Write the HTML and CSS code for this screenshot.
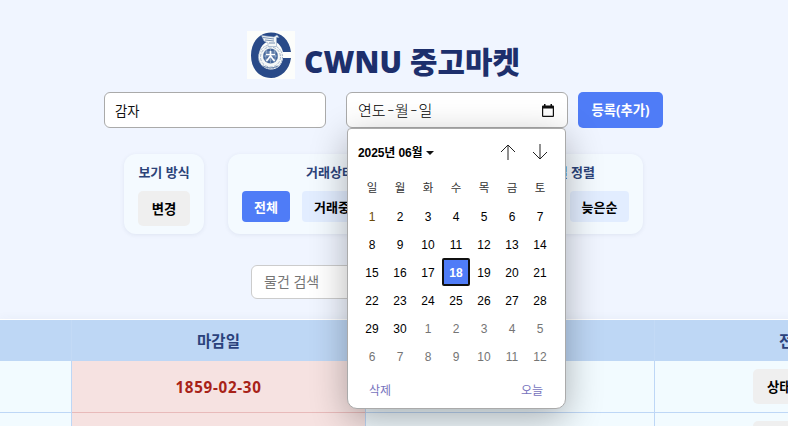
FILE: index.html
```html
<!DOCTYPE html>
<html lang="ko">
<head>
<meta charset="utf-8">
<title>CWNU 중고마켓</title>
<link rel="stylesheet" href="styles.css">
</head>
<body>
<main class="page">
  <header class="brand">
    <svg class="logo" viewBox="0 0 48 48" aria-hidden="true">
      <rect width="48" height="48" fill="#fcfdfb"/>
      <path d="M44 21C42.500 8.500 34 1.500 24 1.500C12.500 1.500 4 11 4 24.500S12.500 47 24 47C34 47 42.500 39 44 27H36C35 34 30.500 38.500 24 38.500C17 38.500 12 33 12 25S17 10 24 10C30 10 34.500 14.500 36 21Z" fill="#294a88"/>
      <circle cx="23.500" cy="26" r="12" fill="#f5f8f7" stroke="#9cafc7" stroke-width="1" stroke-dasharray="2 1"/>
      <circle cx="23.500" cy="26" r="10" fill="none" stroke="#a5b5ca" stroke-width="1" stroke-dasharray="3 1.500"/>
      <circle cx="23.500" cy="25" r="7.500" fill="#45679b"/>
      <path d="M16 25H31M17.500 21H29.500M17.500 29H29.500M23.500 17.500V32.500M20 18Q17 25 20 32M27 18Q30 25 27 32" fill="none" stroke="#a9bdd5" stroke-width=".6"/>
      <path d="M19 23.500H28M23.500 20V25L19.500 30M23.500 25L27.500 30" fill="none" stroke="#fff" stroke-width="1.700"/>
      <path d="M14.500 4.500L27 6L30 4L32 6.500H29.500V15.500H21V12L17 10Z" fill="#f4f7f7" stroke="#8ca3c1" stroke-width=".6"/>
      <path d="M16 6.500L27 8M18 9L27 10M22 12H28" fill="none" stroke="#58769f" stroke-width=".8"/>
      <path d="M16 35Q23 39 31 35" fill="none" stroke="#6580a8" stroke-width="1"/>
    </svg>
    <h1>CWNU 중고마켓</h1>
  </header>

  <form class="entry">
    <div class="field">감자</div>
    <div class="field date">
      <span class="date-text">연도<b>-</b>월<b>-</b>일</span>
      <svg class="cal-icon" viewBox="0 0 12 13" aria-hidden="true"><path fill="#111" fill-rule="evenodd" d="M2 0H3.500V1.500H8.500V0H10V1.500H11Q12 1.500 12 2.500V12Q12 13 11 13H1Q0 13 0 12V2.500Q0 1.500 1 1.500H2ZM1.200 4.500V11.800H10.800V4.500Z"/></svg>
      <section class="picker">
        <div class="picker-head">
          <span class="month">2025년 06월</span><i class="caret"></i>
          <svg class="arrow up" viewBox="0 0 16 16"><path d="M8 16V1M1 8L8 1L15 8"/></svg>
          <svg class="arrow" viewBox="0 0 16 16"><path d="M8 0V15M1 8L8 15L15 8"/></svg>
        </div>
        <div class="days week"><span>일</span><span>월</span><span>화</span><span>수</span><span>목</span><span>금</span><span>토</span></div>
        <div class="days">
          <span class="sunday">1</span><span>2</span><span>3</span><span>4</span><span>5</span><span>6</span><span>7</span>
          <span>8</span><span>9</span><span>10</span><span>11</span><span>12</span><span>13</span><span>14</span>
          <span>15</span><span>16</span><span>17</span><span class="today">18</span><span>19</span><span>20</span><span>21</span>
          <span>22</span><span>23</span><span>24</span><span>25</span><span>26</span><span>27</span><span>28</span>
          <span>29</span><span>30</span><span class="out">1</span><span class="out">2</span><span class="out">3</span><span class="out">4</span><span class="out">5</span>
          <span class="out">6</span><span class="out">7</span><span class="out">8</span><span class="out">9</span><span class="out">10</span><span class="out">11</span><span class="out">12</span>
        </div>
        <div class="picker-foot"><span>삭제</span><span>오늘</span></div>
      </section>
    </div>
    <div class="submit">등록(추가)</div>
  </form>

  <div class="filters">
    <section class="card view">
      <h2>보기 방식</h2>
      <div class="gray-button">변경</div>
    </section>
    <section class="card options">
      <div class="group status">
        <h2>거래상태</h2>
        <div class="chips"><div class="chip active">전체</div><div class="chip">거래중</div></div>
      </div>
      <div class="group order">
        <h2>마감일 정렬</h2>
        <div class="chips"><div class="chip late">늦은순</div></div>
      </div>
    </section>
  </div>

  <div class="search">물건 검색</div>

  <div class="table">
    <div class="cell th"></div><div class="cell th">마감일</div><div class="cell th"></div><div class="cell th last">전환</div>
    <div class="cell"></div><div class="cell due">1859-02-30</div><div class="cell"></div><div class="cell last"><div class="gray-button">상태</div></div>
    <div class="cell"></div><div class="cell due"></div><div class="cell"></div><div class="cell last"><div class="gray-button"></div></div>
  </div>
</main>
</body>
</html>
```
FILE: styles.css
```css
* { box-sizing: border-box; }
body {
  margin: 0;
  overflow: hidden;
  background: #f0f5ff;
  font-family: "Noto Sans", "Noto Sans CJK KR", sans-serif;
}
h1, h2 { margin: 0; }
.page { width: 788px; height: 426px; overflow: hidden; padding-top: 31px; }

.brand { display: flex; gap: 9px; height: 48px; margin-left: 247px; }
.logo { width: 48px; height: 48px; }
.brand h1 {
  color: #1d2f6c;
  font-size: 29.8px;
  letter-spacing: .1px;
  line-height: 62px;
  font-weight: 900;
  white-space: nowrap;
}

.entry { display: flex; height: 36px; margin: 13px 0 0 104px; }
.field {
  width: 222px;
  height: 36px;
  padding: 0 10px;
  border: 1px solid #aaa;
  border-radius: 6px;
  background: #fff;
  color: #111;
  font-size: 13.333px;
  line-height: 36px;
}
.date { position: relative; display: flex; align-items: center; justify-content: space-between; margin-left: 20px; padding: 0 13px 0 11px; }
.date-text { color: #000; font-weight: 300; font-size: 15px; line-height: 32px; font-family: "Noto Sans CJK KR", sans-serif; }
.date-text b { display: inline-block; width: 9.500px; font-weight: 300; text-align: center; transform: scaleX(1.4); }
.cal-icon { width: 12px; height: 13px; }
.submit {
  width: 85px;
  margin-left: 10px;
  border-radius: 5px;
  background: #4f7cf7;
  color: #fff;
  font-size: 13.333px;
  font-weight: 700;
  line-height: 37px;
  text-align: center;
}

.picker {
  position: absolute;
  z-index: 5;
  left: 0;
  top: 35px;
  width: 219px;
  height: 281px;
  padding: 0 10px;
  border: 1px solid #aaa;
  border-radius: 4px 4px 10px 10px;
  background: #fff;
  box-shadow: 0 10px 36px rgba(0, 0, 0, .3);
  color: #000;
  font: 12px/28px "Liberation Sans", "Noto Sans CJK KR", sans-serif;
}
.picker-head { display: flex; align-items: center; height: 46px; padding: 2px 7px 0 0; }
.month { font-weight: 700; letter-spacing: -.1px; white-space: nowrap; }
.caret { margin-left: 3px; border: 4px solid transparent; border-top-color: #111; border-bottom: 0; }
.arrow { width: 16px; height: 16px; margin-bottom: 2px; fill: none; stroke: #222; stroke-width: 1; }
.arrow.up { margin: 0 16px 2px auto; }
.days { display: grid; grid-template-columns: repeat(7, 28px); grid-auto-rows: 28px; text-align: center; }
.week { margin-bottom: 1px; height: 27px; color: #333; font-size: 11.5px; line-height: 26px; }
.sunday { color: #6b4a08; }
.out { color: #757575; }
.today { margin-top: -1px; height: 28px; border: 2px solid #101010; border-radius: 2px; background: #4f7cf7; color: #fff; font-weight: 700; line-height: 26px; }
.picker-foot { display: flex; justify-content: space-between; padding: 6px 12px 0 11px; color: #7773bd; }

.filters { display: flex; gap: 24px; margin: 26px 0 0 124px; }
.card { height: 80px; border-radius: 12px; background: #f4faff; box-shadow: 0 1px 4px rgba(50, 70, 110, .09); }
.view { width: 80px; padding: 0 14px; }
.card h2 { height: 37px; color: #2c4379; font-size: 13px; font-weight: 600; line-height: 36px; white-space: nowrap; text-align: center; }
.options { display: flex; width: 415px; padding: 0 14px; }
.gray-button { width: 52px; height: 35px; border-radius: 5px; background: #efefef; color: #000; font-size: 13.333px; font-weight: 600; line-height: 36px; text-align: center; white-space: nowrap; }
.status { width: 176px; }
.order { display: flex; flex: 1; flex-direction: column; align-items: flex-end; }
.order h2 { padding-right: 34px; }
.chips { display: flex; gap: 12px; }
.chip { width: 60px; height: 31px; border-radius: 4px; background: #e2edff; color: #000; font-size: 13px; font-weight: 600; line-height: 32px; text-align: center; white-space: nowrap; }
.chip.active { width: 48px; background: #4f7cf7; color: #fff; font-weight: 700; }
.chip.late { width: 59px; }

.search {
  width: 265px;
  height: 34px;
  margin: 31px 0 0 251px;
  padding-left: 12px;
  border: 1px solid #ccc;
  border-radius: 6px;
  background: #fff;
  color: #757575;
  font-size: 14px;
  line-height: 32px;
}

.table {
  display: grid;
  grid-template-columns: 72px 294px 289px 250px;
  grid-template-rows: 41px 52px 52px;
  width: 905px;
  margin-top: 20px;
  border-top: 1px solid #fff;
  box-shadow: 0 0 10px rgba(50, 70, 110, .05);
}
.cell { display: flex; align-items: center; justify-content: center; border: solid #bed7f6; border-width: 0 1px 1px 0; background: #f2fbff; }
.th { border-color: #c3daf6; border-bottom-color: #bed7f5; background: #bed7f5; color: #2b427c; font-size: 15.500px; font-weight: 700; }
.due { border-bottom-color: #e8baba; background: #f6e2e1; color: #a82218; font-size: 15.2px; letter-spacing: .7px; font-weight: 700; padding-top: 1px; }
.last .gray-button { width: 78px; text-align: left; padding-left: 14px; }
.cell.last { justify-content: flex-start; padding-left: 98px; }
.th.last { padding-left: 124px; }
```
